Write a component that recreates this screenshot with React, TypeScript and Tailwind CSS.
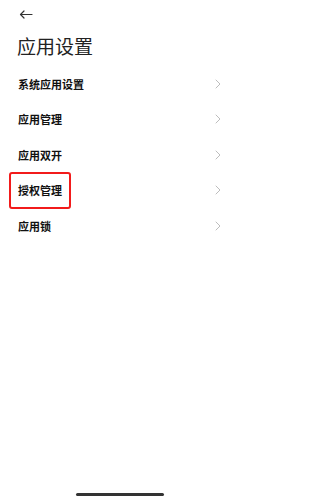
import React from 'react';

const items = ['系统应用设置', '应用管理', '应用双开', '授权管理', '应用锁'];

function Chevron() {
  return (
    <svg width="6" height="10" viewBox="0 0 6 10" fill="none">
      <path d="M1 1l4 4-4 4" stroke="#bdbdbd" strokeWidth="1" strokeLinecap="round" strokeLinejoin="round" />
    </svg>
  );
}

export default function App() {
  return (
    <div
      className="relative flex h-[500px] w-[240px] flex-col bg-white"
      style={{ fontFamily: '"Noto Sans CJK SC", "Noto Sans", sans-serif' }}
    >
      <div className="flex h-[27px] items-center pl-[19px] pt-[1px]">
        <svg width="14" height="9" viewBox="0 0 14 9" fill="none">
          <path d="M13 4.5H1.5M5 1L1.5 4.5 5 8" stroke="#333" strokeWidth="1.2" strokeLinecap="round" strokeLinejoin="round" />
        </svg>
      </div>
      <h1 className="mt-[4px] pl-[17px] text-[19px] font-normal leading-[30px] text-[#222]">应用设置</h1>
      <ul className="mt-[5px] flex flex-col">
        {items.map((label, i) => (
          <li key={label} className="flex h-[35.5px] items-center justify-between pl-[18px] pr-[19px]">
            <span
              className={
                i === 3
                  ? '-ml-[9px] flex h-[37px] items-center rounded-[3px] border-2 border-[#f21b1b] pl-[7px] pr-[7px] text-[11px] font-semibold text-[#111]'
                  : 'text-[11px] font-semibold text-[#111]'
              }
            >
              {label}
            </span>
            <Chevron />
          </li>
        ))}
      </ul>
      <div className="mt-auto mb-[4px] flex justify-center">
        <div className="h-[3px] w-[88px] rounded-full bg-[#333]" />
      </div>
    </div>
  );
}
